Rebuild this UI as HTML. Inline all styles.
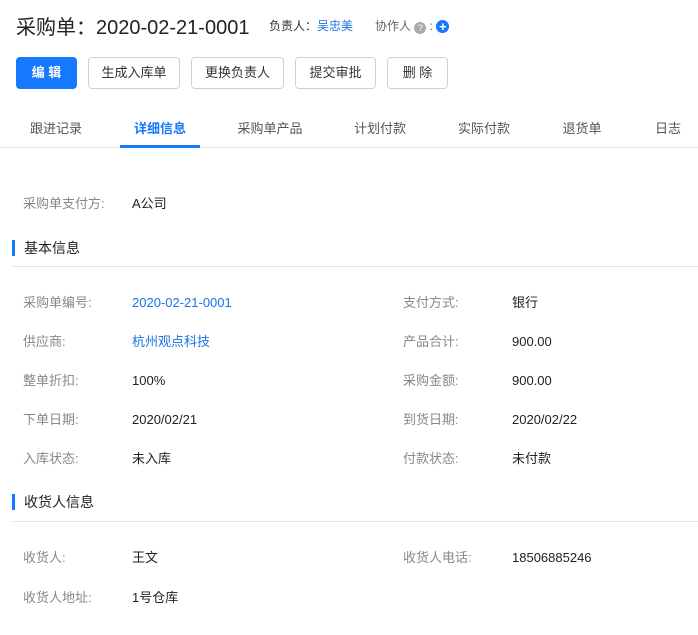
<!DOCTYPE html><html><head><meta charset="utf-8"><style>
body{margin:0;width:698px;height:635px;background:#fff;font-family:"Liberation Sans","Noto Sans CJK SC",sans-serif;color:#333;position:relative;overflow:hidden}
.a{position:absolute;white-space:nowrap}
.btn{position:absolute;top:57px;height:30px;border:1px solid #d0d0d0;border-radius:4px;font-size:13px;line-height:30px;text-align:center;color:#333;background:#fff}
.tab{position:absolute;top:120px;font-size:13px;line-height:18px;color:#555;transform:translateX(-50%)}
.l,.v{position:absolute;font-size:13px;line-height:16px;height:16px;white-space:nowrap;margin-top:1px}
.l{color:#888}
.v{color:#222}
.b{color:#1a73e8}
.hd{position:absolute;left:12px;border-left:3px solid #1677ff;padding-left:9px;font-size:14px;color:#222;line-height:16px}
.ln{position:absolute;left:12px;right:0;height:1px;background:#e3e3e3}
</style></head><body>
<div class="a" style="left:16px;top:15px;font-size:20px;line-height:26px;color:#222">采购单：2020-02-21-0001</div>
<div class="a" style="left:269px;top:18px;font-size:12px;line-height:16px;color:#333">负责人：<span class="b">吴忠美</span></div>
<div class="a" style="left:375px;top:18px;font-size:12px;line-height:16px;color:#666">协作人 <span style="display:inline-block;width:12px;height:12px;border-radius:50%;background:#aaa;color:#fff;font-size:9px;line-height:12px;text-align:center;vertical-align:-1px">?</span> : <span style="display:inline-block;width:13px;height:13px;border-radius:50%;background:#1677ff;color:#fff;font-size:13px;font-weight:bold;line-height:13px;text-align:center;vertical-align:-1px">+</span></div>
<div class="btn" style="left:16px;width:59px;background:#1677ff;border-color:#1677ff;color:#fff;font-weight:bold">编 辑</div>
<div class="btn" style="left:88px;width:90px">生成入库单</div>
<div class="btn" style="left:191px;width:91px">更换负责人</div>
<div class="btn" style="left:295px;width:79px">提交审批</div>
<div class="btn" style="left:387px;width:59px">删 除</div>
<div class="tab" style="left:56px">跟进记录</div>
<div class="tab" style="left:160px;color:#1677ff;font-weight:bold">详细信息</div>
<div class="tab" style="left:270px">采购单产品</div>
<div class="tab" style="left:380px">计划付款</div>
<div class="tab" style="left:484px">实际付款</div>
<div class="tab" style="left:582px">退货单</div>
<div class="tab" style="left:668px">日志</div>
<div class="a" style="left:0;right:0;top:147px;height:1px;background:#e3e3e3"></div>
<div class="a" style="left:120px;width:80px;top:145px;height:3px;background:#1677ff"></div>
<div class="l" style="left:23px;top:195px">采购单支付方:</div><div class="v" style="left:132px;top:195px">A公司</div>
<div class="hd" style="top:240px">基本信息</div><div class="ln" style="top:266px"></div>
<div class="l" style="left:23px;top:294px">采购单编号:</div><div class="v b" style="left:132px;top:294px">2020-02-21-0001</div>
<div class="l" style="left:403px;top:294px">支付方式:</div><div class="v" style="left:512px;top:294px">银行</div>
<div class="l" style="left:23px;top:333px">供应商:</div><div class="v b" style="left:132px;top:333px">杭州观点科技</div>
<div class="l" style="left:403px;top:333px">产品合计:</div><div class="v" style="left:512px;top:333px">900.00</div>
<div class="l" style="left:23px;top:372px">整单折扣:</div><div class="v" style="left:132px;top:372px">100%</div>
<div class="l" style="left:403px;top:372px">采购金额:</div><div class="v" style="left:512px;top:372px">900.00</div>
<div class="l" style="left:23px;top:411px">下单日期:</div><div class="v" style="left:132px;top:411px">2020/02/21</div>
<div class="l" style="left:403px;top:411px">到货日期:</div><div class="v" style="left:512px;top:411px">2020/02/22</div>
<div class="l" style="left:23px;top:450px">入库状态:</div><div class="v" style="left:132px;top:450px">未入库</div>
<div class="l" style="left:403px;top:450px">付款状态:</div><div class="v" style="left:512px;top:450px">未付款</div>
<div class="hd" style="top:494px">收货人信息</div><div class="ln" style="top:521px"></div>
<div class="l" style="left:23px;top:549px">收货人:</div><div class="v" style="left:132px;top:549px">王文</div>
<div class="l" style="left:403px;top:549px">收货人电话:</div><div class="v" style="left:512px;top:549px">18506885246</div>
<div class="l" style="left:23px;top:589px">收货人地址:</div><div class="v" style="left:132px;top:589px">1号仓库</div>
</body></html>
